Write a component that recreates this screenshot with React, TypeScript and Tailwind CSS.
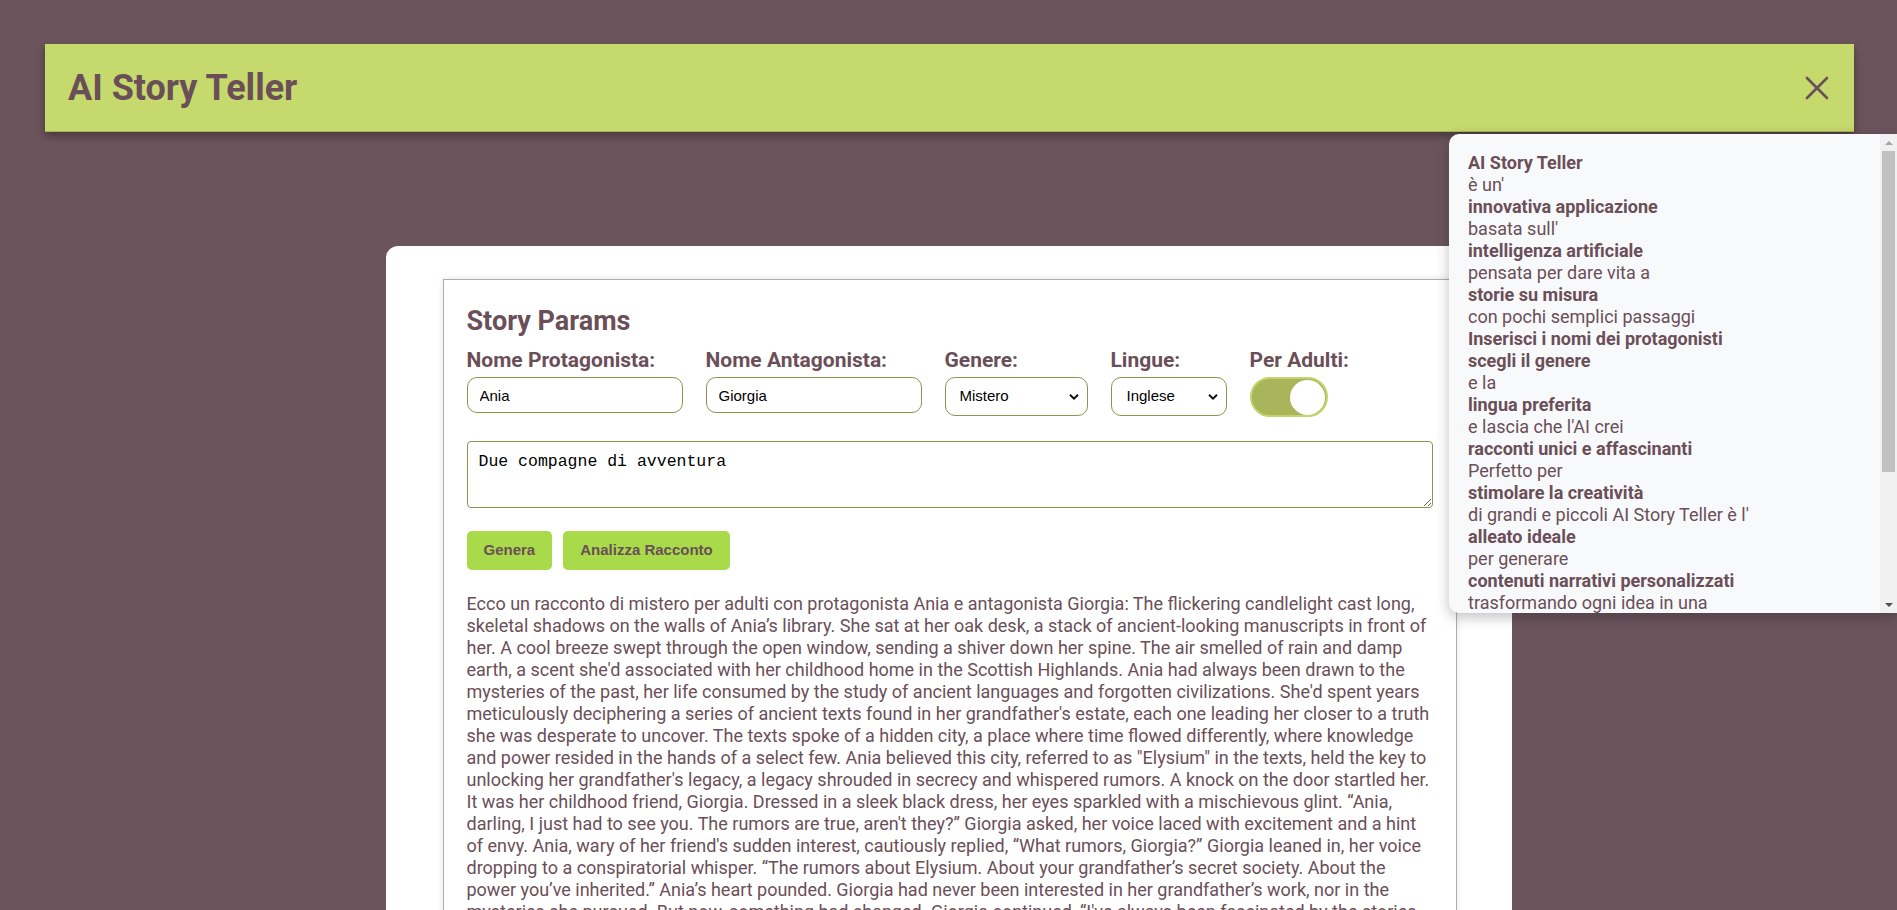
import { X } from 'lucide-react';

const storyText =
  'Ecco un racconto di mistero per adulti con protagonista Ania e antagonista Giorgia: The flickering candlelight cast long, skeletal shadows on the walls of Ania’s library. She sat at her oak desk, a stack of ancient-looking manuscripts in front of her. A cool breeze swept through the open window, sending a shiver down her spine. The air smelled of rain and damp earth, a scent she\'d associated with her childhood home in the Scottish Highlands. Ania had always been drawn to the mysteries of the past, her life consumed by the study of ancient languages and forgotten civilizations. She\'d spent years meticulously deciphering a series of ancient texts found in her grandfather\'s estate, each one leading her closer to a truth she was desperate to uncover. The texts spoke of a hidden city, a place where time flowed differently, where knowledge and power resided in the hands of a select few. Ania believed this city, referred to as "Elysium" in the texts, held the key to unlocking her grandfather\'s legacy, a legacy shrouded in secrecy and whispered rumors. A knock on the door startled her. It was her childhood friend, Giorgia. Dressed in a sleek black dress, her eyes sparkled with a mischievous glint. “Ania, darling, I just had to see you. The rumors are true, aren\'t they?” Giorgia asked, her voice laced with excitement and a hint of envy. Ania, wary of her friend\'s sudden interest, cautiously replied, “What rumors, Giorgia?” Giorgia leaned in, her voice dropping to a conspiratorial whisper. “The rumors about Elysium. About your grandfather’s secret society. About the power you’ve inherited.” Ania’s heart pounded. Giorgia had never been interested in her grandfather’s work, nor in the mysteries she pursued. But now, something had changed. Giorgia continued, “I\'ve always been fascinated by the stories your grandfather told us when we were children. I want to help you find Elysium.” Ania hesitated, a knot of unease tightening in her stomach. Something in Giorgia’s smile told her that the hidden city was not the only thing her friend was searching for.';

const aboutLines: [string, boolean][] = [
  ['AI Story Teller', true],
  ["è un'", false],
  ['innovativa applicazione', true],
  ["basata sull'", false],
  ['intelligenza artificiale', true],
  ['pensata per dare vita a', false],
  ['storie su misura', true],
  ['con pochi semplici passaggi', false],
  ['Inserisci i nomi dei protagonisti', true],
  ['scegli il genere', true],
  ['e la', false],
  ['lingua preferita', true],
  ["e lascia che l'AI crei", false],
  ['racconti unici e affascinanti', true],
  ['Perfetto per', false],
  ['stimolare la creatività', true],
  ["di grandi e piccoli AI Story Teller è l'", false],
  ['alleato ideale', true],
  ['per generare', false],
  ['contenuti narrativi personalizzati', true],
  ['trasformando ogni idea in una', false],
  ['avventura indimenticabile', true],
];

function Chevron() {
  return (
    <svg width="10" height="7" viewBox="0 0 10 7" className="pointer-events-none absolute right-[9px] top-1/2 -translate-y-1/2">
      <path d="M1 1.2 L5 5.2 L9 1.2" fill="none" stroke="#111" strokeWidth="2" />
    </svg>
  );
}

function Field({ label, children }: { label: string; children: React.ReactNode }) {
  return (
    <div className="flex flex-col gap-[6px]">
      <span className="text-[21px] font-bold leading-[22px]">{label}</span>
      {children}
    </div>
  );
}

function AboutPopup() {
  return (
    <div className="absolute left-[1449px] top-[134px] flex h-[479px] w-[448px] overflow-hidden rounded-l-[10px] bg-[#f8f9fa] shadow-[0_4px_14px_rgba(0,0,0,0.25)]">
      <div className="flex-1 overflow-hidden pl-[19px] pt-[18px] text-[18px] leading-[22px] text-[#6b4f58]">
        {aboutLines.map(([t, b], i) => (
          <div key={i} className={b ? 'font-bold' : 'font-normal'}>
            {t}
          </div>
        ))}
      </div>
      <div className="flex w-[17px] flex-col bg-[#f1f1f1]">
        <div className="flex h-[17px] items-center justify-center">
          <div className="h-0 w-0 border-x-[4px] border-b-[4px] border-x-transparent border-b-[#a3a3a3]" />
        </div>
        <div className="mx-[2px] h-[321px] bg-[#c1c1c1]" />
        <div className="flex-1" />
        <div className="flex h-[17px] items-center justify-center">
          <div className="h-0 w-0 border-x-[4px] border-t-[4px] border-x-transparent border-t-[#505050]" />
        </div>
      </div>
    </div>
  );
}

export default function App() {
  return (
    <div className="relative min-h-screen overflow-hidden bg-[#6c545c] pb-10 pt-[44px] font-['Roboto',sans-serif] text-[#6b4f58]">
      <header className="ml-[45px] mr-[43px] flex h-[88px] items-center justify-between border-b border-[#a9b458] bg-[#c5d96c] pl-[23px] pr-[17px] shadow-[0_4px_8px_rgba(0,0,0,0.35)]">
        <h1 className="text-[36px] font-bold leading-none">AI Story Teller</h1>
        <X size={40} strokeWidth={1.6} className="text-[#6b4f58]" />
      </header>

      <main className="mx-auto mt-[114px] w-[1126px] rounded-[12px] bg-white pl-[57px] pr-[55px] pt-[33px] pb-10">
        <section className="border border-[#b5aca2] px-[23px] pt-[26px] pb-8 shadow-[0_0_6px_rgba(0,0,0,0.12)]">
          <h2 className="text-[27px] font-bold leading-[30px]">Story Params</h2>

          <div className="mt-[13px] flex items-start gap-[23px]">
            <Field label="Nome Protagonista:">
              <input
                defaultValue="Ania"
                className="h-[36px] w-[216px] rounded-[10px] border border-[#8c9450] px-[12px] font-['Liberation_Sans',sans-serif] text-[15px] text-black outline-none"
              />
            </Field>
            <Field label="Nome Antagonista:">
              <input
                defaultValue="Giorgia"
                className="h-[36px] w-[216px] rounded-[10px] border border-[#8c9450] px-[12px] font-['Liberation_Sans',sans-serif] text-[15px] text-black outline-none"
              />
            </Field>
            <Field label="Genere:">
              <div className="relative w-[143px]">
                <select
                  defaultValue="Mistero"
                  className="h-[39px] w-full appearance-none rounded-[10px] border border-[#8c9450] bg-white pl-[14px] font-['Liberation_Sans',sans-serif] text-[15px] text-black outline-none"
                >
                  <option>Mistero</option>
                  <option>Fantasy</option>
                  <option>Avventura</option>
                </select>
                <Chevron />
              </div>
            </Field>
            <Field label="Lingue:">
              <div className="relative w-[116px]">
                <select
                  defaultValue="Inglese"
                  className="h-[39px] w-full appearance-none rounded-[10px] border border-[#8c9450] bg-white pl-[15px] font-['Liberation_Sans',sans-serif] text-[15px] text-black outline-none"
                >
                  <option>Italiano</option>
                  <option>Inglese</option>
                </select>
                <Chevron />
              </div>
            </Field>
            <Field label="Per Adulti:">
              <div className="flex h-[40px] w-[78px] items-center justify-end rounded-full border-2 border-[#c3d46c] bg-[#a9b55a] pr-[1px]">
                <div className="h-[35px] w-[35px] rounded-full bg-white" />
              </div>
            </Field>
          </div>

          <textarea
            defaultValue="Due compagne di avventura"
            className="mt-[24px] block h-[67px] w-full rounded-[4px] border border-[#8c9450] px-[11px] pt-[10px] font-['Liberation_Mono',monospace] text-[16.5px] leading-[20px] text-black outline-none"
          />

          <div className="mt-[23px] flex gap-[11px] font-['Liberation_Sans',sans-serif] text-[15px] font-bold">
            <button className="h-[39px] rounded-[5px] bg-[#a8da4a] px-[17px]">Genera</button>
            <button className="h-[39px] rounded-[5px] bg-[#a8da4a] px-[17px]">Analizza Racconto</button>
          </div>

          <p className="mt-[23px] text-[18px] leading-[22px]">{storyText}</p>
        </section>
      </main>

      <AboutPopup />
    </div>
  );
}
